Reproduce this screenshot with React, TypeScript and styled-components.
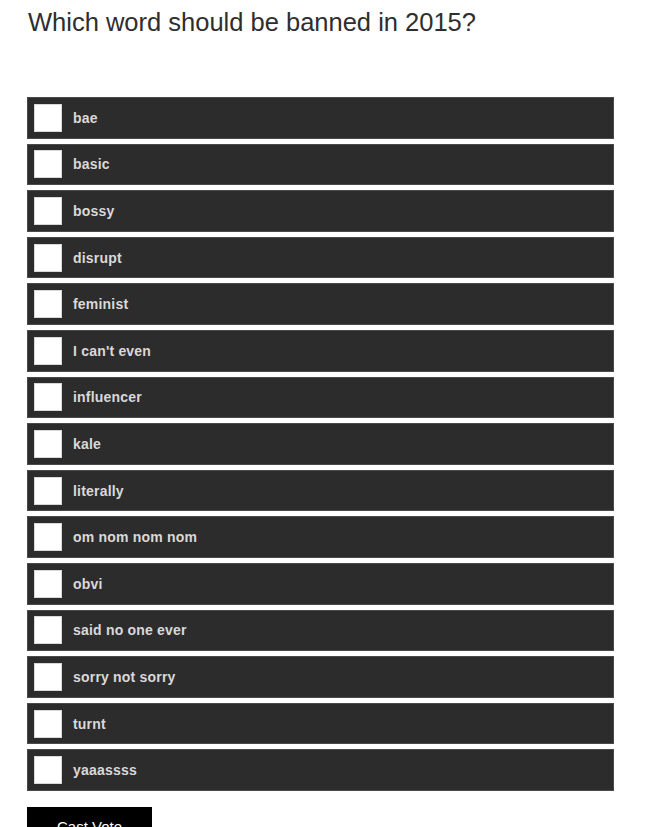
import React from "react";
import styled, { createGlobalStyle } from "styled-components";

const Global = createGlobalStyle`
  html, body { margin: 0; padding: 0; background: #ffffff; }
  body { font-family: "Liberation Sans", Arial, sans-serif; }
`;

const Page = styled.div`
  padding: 8px 36px 0 27px;
  height: 827px;
  box-sizing: border-box;
  overflow: hidden;
`;

const Title = styled.h1`
  margin: 0 0 0 1px;
  font-size: 25.5px;
  line-height: 28px;
  font-weight: normal;
  color: #2e2e2e;
`;

const List = styled.div`
  margin-top: 61px;
  display: flex;
  flex-direction: column;
  gap: 5px;
`;

const Row = styled.label`
  display: flex;
  align-items: center;
  gap: 11px;
  height: 41.6px;
  box-sizing: border-box;
  padding-left: 6px;
  background: #2d2c2d;
  border: 1px solid #4a4a4a;
`;

const Box = styled.span`
  width: 28px;
  height: 28px;
  box-sizing: border-box;
  background: #ffffff;
  border: 1px solid #d8d8d8;
  flex: none;
`;

const Label = styled.span`
  font-size: 14px;
  font-weight: bold;
  letter-spacing: 0.2px;
  color: #d9d9d9;
`;

const Button = styled.button`
  margin-top: 16px;
  width: 125px;
  height: 40px;
  background: #000000;
  color: #ffffff;
  border: none;
  font-family: "Liberation Sans", Arial, sans-serif;
  font-size: 15px;
  padding: 0;
  display: flex;
  justify-content: center;
  align-items: flex-start;
  padding-top: 11px;
`;

const words = [
  "bae",
  "basic",
  "bossy",
  "disrupt",
  "feminist",
  "I can't even",
  "influencer",
  "kale",
  "literally",
  "om nom nom nom",
  "obvi",
  "said no one ever",
  "sorry not sorry",
  "turnt",
  "yaaassss",
];

export default function App() {
  return (
    <Page>
      <Global />
      <Title>Which word should be banned in 2015?</Title>
      <List>
        {words.map((w) => (
          <Row key={w}>
            <Box />
            <Label>{w}</Label>
          </Row>
        ))}
      </List>
      <Button>Cast Vote</Button>
    </Page>
  );
}
